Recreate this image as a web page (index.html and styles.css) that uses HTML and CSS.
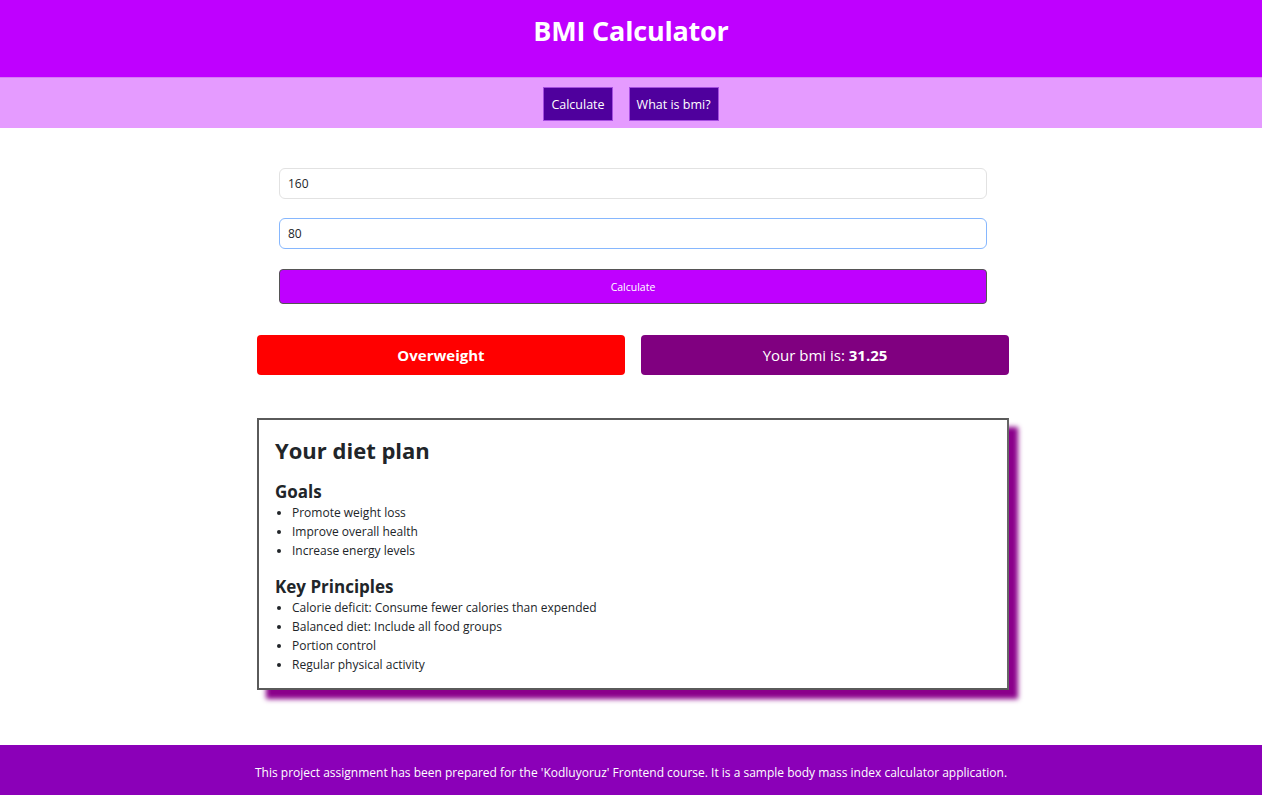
FILE: index.html
```html
<!DOCTYPE html>
<html lang="en">
<head>
<meta charset="utf-8">
<title>BMI Calculator</title>
<link rel="stylesheet" href="styles.css">
</head>
<body>
<header class="site-header">
  <h1 class="site-title">BMI Calculator</h1>
</header>
<nav class="site-nav">
  <a class="nav-btn" href="#">Calculate</a>
  <a class="nav-btn" href="#">What is bmi?</a>
</nav>
<main class="container">
  <form class="calc-form">
    <input class="field" type="text" value="160">
    <input class="field field-focus" type="text" value="80">
    <button class="calc-btn" type="button">Calculate</button>
  </form>
  <div class="results">
    <div class="result result-status">Overweight</div>
    <div class="result result-bmi"><span>Your bmi is: <strong>31.25</strong></span></div>
  </div>
  <section class="diet-card">
    <h2 class="diet-title">Your diet plan</h2>
    <h3 class="diet-sub">Goals</h3>
    <ul class="diet-list">
      <li>Promote weight loss</li>
      <li>Improve overall health</li>
      <li>Increase energy levels</li>
    </ul>
    <h3 class="diet-sub">Key Principles</h3>
    <ul class="diet-list">
      <li>Calorie deficit: Consume fewer calories than expended</li>
      <li>Balanced diet: Include all food groups</li>
      <li>Portion control</li>
      <li>Regular physical activity</li>
    </ul>
  </section>
</main>
<footer class="site-footer">
  <p class="footer-text">This project assignment has been prepared for the 'Kodluyoruz' Frontend course. It is a sample body mass index calculator application.</p>
</footer>
</body>
</html>
```
FILE: styles.css
```css
* { box-sizing: border-box; }
html, body { margin: 0; padding: 0; }
body {
  font-family: "Open Sans", "Noto Sans", sans-serif;
  color: #212529;
  background: #fff;
  min-height: 795px;
  display: flex;
  flex-direction: column;
}
.site-header {
  background: #bf00ff;
  height: 77px;
  display: flex;
  justify-content: center;
  padding-top: 14px;
}
.site-title {
  margin: 0;
  color: #fff;
  font-size: 27px;
  font-weight: 700;
  line-height: 34px;
  letter-spacing: -0.2px;
}
.site-nav {
  background: #e59bff;
  height: 51px;
  display: flex;
  justify-content: center;
  align-items: flex-start;
  gap: 16px;
  padding-top: 9px;
  border-top: 1px solid #d77cf5;
}
.nav-btn {
  display: block;
  background: #4f009d;
  color: #fff;
  text-decoration: none;
  font-size: 12.5px;
  height: 34px;
  line-height: 34px;
  padding: 0 7px;
  border: 1px solid #a64de0;
}
.container {
  width: 756px;
  padding-left: 4px;
  margin: 0 auto;
  flex: 1;
}
.calc-form {
  padding: 40px 22px 0;
  display: flex;
  flex-direction: column;
  gap: 19px;
}
.field {
  display: block;
  width: 100%;
  height: 31px;
  border: 1px solid #e2e2e2;
  border-radius: 6px;
  padding: 0 8px;
  font-family: inherit;
  font-size: 12px;
  color: #212529;
  background: #fff;
  outline: none;
}
.field-focus {
  border-color: #86b7fe;
}
.calc-btn {
  display: block;
  width: 100%;
  height: 35px;
  margin-top: 1px;
  background: #bf00ff;
  border: 1px solid #555;
  border-radius: 4px;
  color: #fff;
  font-family: inherit;
  font-size: 10.5px;
}
.results {
  display: flex;
  gap: 16px;
  margin-top: 31px;
}
.result {
  flex: 1;
  height: 40px;
  border-radius: 4px;
  color: #fff;
  font-size: 15px;
  display: flex;
  align-items: center;
  justify-content: center;
}
.result-status {
  background: #ff0000;
  font-weight: 700;
}
.result-bmi {
  background: #800080;
}
.diet-card {
  margin-top: 43px;
  border: 2px solid #5a5a5a;
  border-right-color: #666;
  box-shadow: 9px 9px 5px #8b008b;
  padding: 14px 16px 14px;
}
.diet-title {
  margin: 0;
  font-size: 22px;
  font-weight: 700;
  line-height: 32px;
}
.diet-sub {
  margin: 15px 0 0;
  font-size: 17px;
  font-weight: 700;
  line-height: 22px;
}
.diet-list {
  margin: 0;
  padding-left: 17px;
  font-size: 12px;
  line-height: 19px;
}
.diet-list + .diet-sub { margin-top: 16px; }
.site-footer {
  background: #8b00b8;
  height: 50px;
  display: flex;
  align-items: center;
  justify-content: center;
  color: #fff;
  margin-top: 55px;
}
.footer-text {
  margin: 4px 0 0;
  font-size: 12px;
}
```
